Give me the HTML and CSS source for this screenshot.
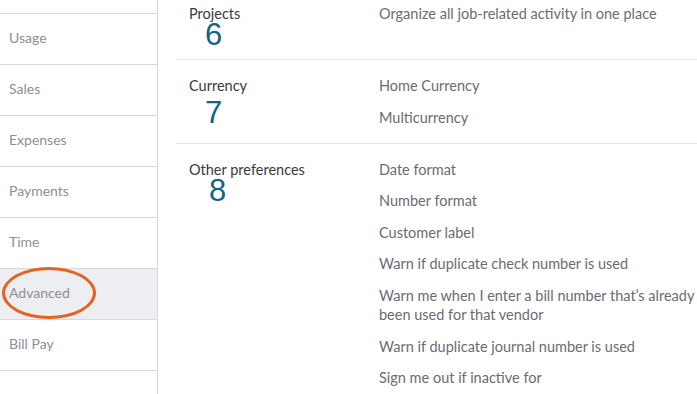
FILE: index.html
```html
<!DOCTYPE html>
<html lang="en">
<head>
<meta charset="utf-8">
<title>Account and settings - Advanced</title>
<link rel="stylesheet" href="styles.css">
</head>
<body>
<div class="page">
  <nav class="sidebar">
    <div class="nav-item nav-item--partial"></div>
    <div class="nav-item">Usage</div>
    <div class="nav-item">Sales</div>
    <div class="nav-item">Expenses</div>
    <div class="nav-item">Payments</div>
    <div class="nav-item">Time</div>
    <div class="nav-item nav-item--active"><span class="nav-text">Advanced</span><span class="ring"></span></div>
    <div class="nav-item">Bill Pay</div>
    <div class="nav-item"></div>
  </nav>
  <main class="content">
    <section class="section section--first">
      <div class="label-cell">
        <div class="label">Projects</div>
        <div class="num num--6">6</div>
      </div>
      <div class="items">
        <div class="item">Organize all job-related activity in one place</div>
      </div>
    </section>
    <section class="section">
      <div class="label-cell">
        <div class="label">Currency</div>
        <div class="num num--7">7</div>
      </div>
      <div class="items">
        <div class="item">Home Currency</div>
        <div class="item">Multicurrency</div>
      </div>
    </section>
    <section class="section section--last">
      <div class="label-cell">
        <div class="label">Other preferences</div>
        <div class="num num--8">8</div>
      </div>
      <div class="items">
        <div class="item">Date format</div>
        <div class="item">Number format</div>
        <div class="item">Customer label</div>
        <div class="item">Warn if duplicate check number is used</div>
        <div class="item">Warn me when I enter a bill number that’s already been used for that vendor</div>
        <div class="item">Warn if duplicate journal number is used</div>
        <div class="item">Sign me out if inactive for</div>
      </div>
    </section>
  </main>
</div>
</body>
</html>
```

FILE: styles.css
```css
html, body {
  margin: 0;
  padding: 0;
  background: #ffffff;
}
body {
  width: 697px;
  height: 394px;
  overflow: hidden;
  font-family: Lato, "Noto Sans", "Liberation Sans", sans-serif;
  font-size: 14.5px;
}
.page {
  display: flex;
  align-items: flex-start;
}
.sidebar {
  width: 157px;
  flex: none;
  border-right: 1px solid #d6d9dd;
  display: flex;
  flex-direction: column;
}
.nav-item {
  height: 50px;
  box-sizing: border-box;
  height: 51px;
  border-bottom: 1px solid #d6d9dd;
  padding: 0 0 3px 9px;
  display: flex;
  align-items: center;
  font-size: 14px;
  color: #8d9096;
  position: relative;
}
.nav-item--partial {
  height: 14px;
  padding: 0;
}
.nav-item--active {
  background: #eceef1;
}
.ring {
  position: absolute;
  left: 2px;
  top: -2px;
  width: 88px;
  height: 46px;
  border: 3px solid #e3641f;
  border-radius: 50%;
}
.content {
  flex: 1;
  margin-left: 18px;
  margin-top: -12px;
}
.section {
  display: grid;
  grid-template-columns: 190px 1fr;
  padding: 16px 0 16px 13px;
  border-bottom: 1px solid #e4e6e9;
}
.section--first {
  padding-bottom: 36px;
}
.section--last {
  border-bottom: none;
}
.label-cell {
  position: relative;
}
.label {
  line-height: 19px;
  color: #393a3d;
}
.num {
  position: absolute;
  font-family: "Liberation Sans", Arial, sans-serif;
  font-size: 31px;
  line-height: 23px;
  color: #136583;
}
.num--6 { top: 19px; left: 16px; }
.num--7 { top: 25px; left: 16px; }
.num--8 { top: 19px; left: 20px; }
.items {
  display: flex;
  flex-direction: column;
  gap: 12.6px;
}
.item {
  line-height: 19px;
  color: #6b6c72;
}
```
